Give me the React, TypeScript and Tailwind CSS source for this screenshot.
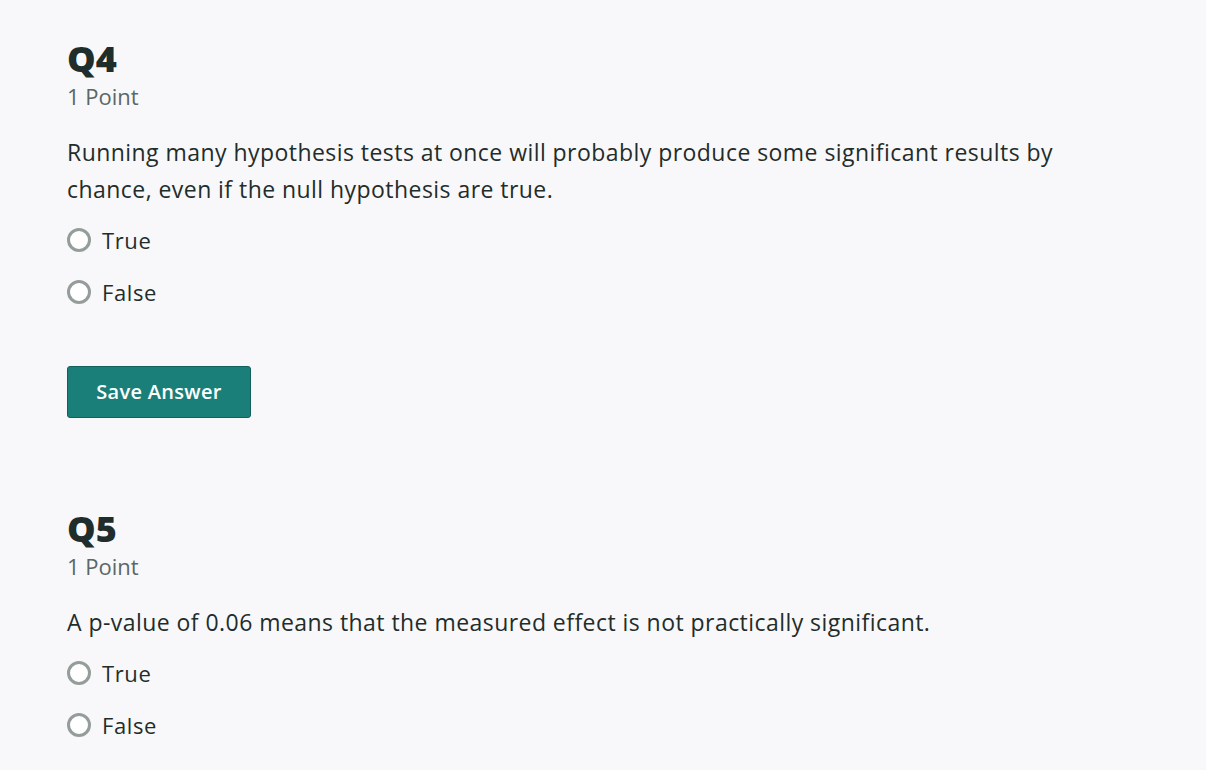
import React from "react";

const font = { fontFamily: "'Open Sans', Lato, sans-serif" };

function Radio({ label }: { label: string }) {
  return (
    <label className="flex items-center h-[52px]">
      <span className="w-[24px] h-[24px] rounded-full border-[3px] border-[#959d9b] bg-white mr-[11px]" />
      <span className="text-[22px] tracking-[0.6px] text-[#1f2d2b]">{label}</span>
    </label>
  );
}

function Question({ q, text, save }: { q: string; text: string; save?: boolean }) {
  return (
    <section>
      <h2 className="text-[36px] font-extrabold leading-[40px] text-[#1f2d2b]">{q}</h2>
      <div className="mt-[2px] text-[22px] leading-[30px] text-[#5b6766]">1 Point</div>
      <p className="mt-[23px] text-[23px] tracking-[0.45px] leading-[37px] text-[#1f2d2b] max-w-[1040px]">{text}</p>
      <div className="mt-[6px]">
        <Radio label="True" />
        <Radio label="False" />
      </div>
      {save && (
        <button className="mt-[48px] w-[184px] h-[52px] rounded-[3px] bg-[#1b7f79] border border-[#11605b] text-white text-[20px] tracking-[0.3px] font-semibold">
          Save Answer
        </button>
      )}
    </section>
  );
}

export default function App() {
  return (
    <div className="w-[1206px] h-[770px] bg-[#f8f8fa] overflow-hidden pl-[67px] pt-[39px]" style={font}>
      <Question
        q="Q4"
        text="Running many hypothesis tests at once will probably produce some significant results by chance, even if the null hypothesis are true."
        save
      />
      <div className="mt-[91px]">
        <Question q="Q5" text="A p-value of 0.06 means that the measured effect is not practically significant." />
      </div>
    </div>
  );
}
